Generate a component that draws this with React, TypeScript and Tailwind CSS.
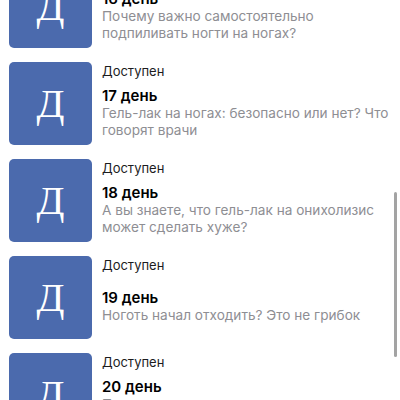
const items = [
  { day: "16 день", text: "Почему важно самостоятельно подпиливать ногти на ногах?" },
  { day: "17 день", text: "Гель-лак на ногах: безопасно или нет? Что говорят врачи" },
  { day: "18 день", text: "А вы знаете, что гель-лак на онихолизис может сделать хуже?" },
  { day: "19 день", text: "Ноготь начал отходить? Это не грибок" },
  { day: "20 день", text: "Почему ногти на ногах желтеют и как это исправить" },
];

function Row({ day, text }: { day: string; text: string }) {
  return (
    <div className="flex h-[83px] gap-[10px]">
      {/* Thumbnail */}
      <div className="flex h-[83px] w-[83px] shrink-0 items-center justify-center rounded-[5px] bg-[#4b6aad]">
        <span className="font-['Liberation_Serif',serif] text-[41px] leading-none text-white">Д</span>
      </div>

      {/* Text */}
      <div className="flex min-w-0 flex-1 flex-col pr-[6px]">
        <div className="text-[13px] leading-[18px] text-[#1c1c1e]">Доступен</div>
        <div className="flex flex-1 flex-col justify-center">
          <div className="text-[15px] font-semibold leading-[18px] text-black">{day}</div>
          <div className="text-[13.6px] leading-[17px] text-[#8e8e93]">{text}</div>
        </div>
      </div>
    </div>
  );
}

export default function App() {
  return (
    <div className="relative h-[400px] w-[400px] overflow-hidden bg-white font-['Inter',sans-serif]">
      <div className="-mt-[35px] flex flex-col gap-[14px] pl-[9px]">
        {items.map((it) => (
          <Row key={it.day} day={it.day} text={it.text} />
        ))}
      </div>
      {/* Scroll indicator */}
      <div className="absolute left-[394px] top-[192px] h-[165px] w-[3px] rounded-full bg-[#a3a3a3]" />
    </div>
  );
}
